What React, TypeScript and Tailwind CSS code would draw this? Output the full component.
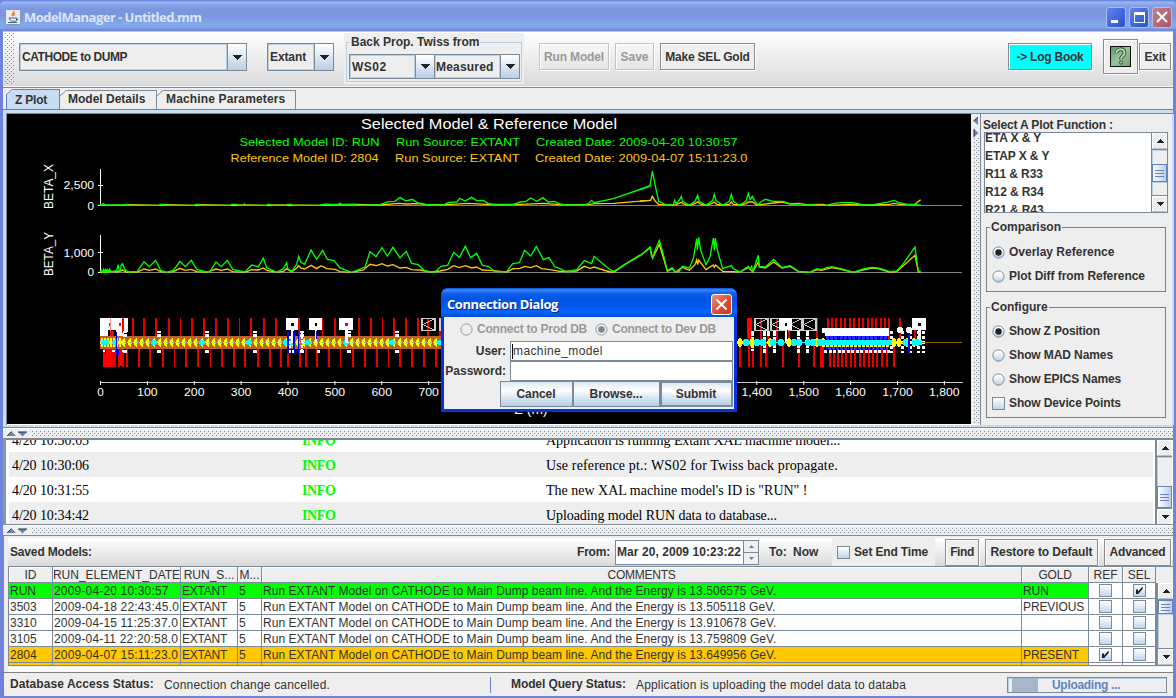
import type { ReactNode } from 'react';

/* ---------- shared Metal widgets ---------- */

const BOLD = 'font-bold text-[12px] leading-[14px] whitespace-nowrap text-[#333]';

function Label({ children, className = '' }: { children: ReactNode; className?: string }) {
  return <span className={`font-bold text-[12px] leading-[14px] whitespace-nowrap ${className}`}>{children}</span>;
}

function Combo({ text, className, tracking }: { text: string; className: string; tracking: string }) {
  return (
    <div className={`flex shrink-0 border border-[#7a8a99] ${className}`}>
      <div className="flex min-w-0 flex-1 items-center border border-[#b8cfe5] bg-[#eee] pl-px">
        <Label className={tracking}>{text}</Label>
      </div>
      <div className="flex w-[19px] shrink-0 items-center justify-center border-l border-[#7a8a99] bg-gradient-to-b from-white to-[#b8cfe5]">
        <svg width="10" height="5" viewBox="0 0 10 5" shapeRendering="crispEdges">
          <path d="M0 0h10L5 5z" fill="#222" />
        </svg>
      </div>
    </div>
  );
}

function ToolButton({ children, className }: { children: ReactNode; className: string }) {
  return (
    <div className={`flex shrink-0 items-center justify-center border shadow-[1px_1px_0_#fff,inset_1px_1px_0_#fff] ${className}`}>
      {children}
    </div>
  );
}

function Radio({ on = false, disabled = false }: { on?: boolean; disabled?: boolean }) {
  return (
    <svg width="13" height="13" viewBox="0 0 13 13" className="-ml-px shrink-0">
      <defs>
        <linearGradient id="radioFill" x1="0" y1="0" x2="0" y2="1">
          <stop offset="0.2" stopColor="#fff" />
          <stop offset="1" stopColor="#b8cfe5" />
        </linearGradient>
      </defs>
      <circle cx="6.5" cy="6.5" r="5.6" fill={disabled ? '#eee' : 'url(#radioFill)'} stroke={disabled ? '#999' : '#7a8a99'} />
      {on && <circle cx="6.5" cy="6.5" r="3.2" fill={disabled ? '#7a8a99' : '#222'} />}
    </svg>
  );
}

function Check({ on = false }: { on?: boolean }) {
  return (
    <span className="-ml-px flex size-[13px] shrink-0 items-center justify-center border border-[#7a8a99] bg-gradient-to-b from-white to-[#c0d6ec]">
      {on && (
        <svg width="9" height="9" viewBox="0 0 9 9">
          <path d="M1 3.5h2v2L7.6 0.6V3L3.2 8H1z" fill="#222" />
        </svg>
      )}
    </span>
  );
}

function ScrollArrow({ up = false }: { up?: boolean }) {
  return (
    <div className="flex h-4 shrink-0 items-center justify-center border border-white border-b-[#b8c0c8] bg-[#eee]">
      <svg width="8" height="4" viewBox="0 0 8 4" shapeRendering="crispEdges">
        <path d={up ? 'M0 4h8L4 0z' : 'M0 0h8L4 4z'} fill="#222" />
      </svg>
    </div>
  );
}

function ScrollBar({ gapClass, thumbClass, className = 'w-[17px] border-l-2' }: { gapClass: string; thumbClass: string; className?: string }) {
  return (
    <div className={`flex shrink-0 flex-col border-[#7a8a99] bg-[#eee] ${className}`}>
      <ScrollArrow up />
      <div className={`shrink-0 border-t border-[#7a8a99] shadow-[inset_1px_1px_0_#b8cfe5] ${gapClass}`} />
      <div className={`flex shrink-0 flex-col items-center justify-center gap-px border border-[#6382bf] bg-gradient-to-r from-white to-[#b8cfe5] ${thumbClass}`}>
        <i className="mb-px h-px w-[9px] bg-[#6382bf]" />
        <i className="mb-px h-px w-[9px] bg-[#6382bf]" />
        <i className="h-px w-[9px] bg-[#6382bf]" />
      </div>
      <div className="flex-1 border-b border-[#7a8a99] shadow-[inset_1px_1px_0_#b8cfe5]" />
      <ScrollArrow />
    </div>
  );
}

const DOTS =
  'bg-[radial-gradient(circle_at_0.5px_0.5px,#7f8993_0.6px,transparent_0.65px),radial-gradient(circle_at_2.5px_2.5px,#7f8993_0.6px,transparent_0.65px)] bg-[length:4px_4px]';

function HorizontalDivider() {
  return (
    <div className="flex h-[10px] shrink-0 items-center border-t border-white bg-[#eee] pl-[4px]">
      <svg width="21" height="6" viewBox="0 0 21 6" className="mr-1">
        <path d="M0 5L4.5 0.5L9 5z" fill="#6382bf" />
        <path d="M0 5L4.5 0.5" stroke="#333" fill="none" />
        <path d="M11 1h9L15.500 5.500z" fill="#6382bf" />
        <path d="M11 1h9" stroke="#333" fill="none" />
      </svg>
      <div className={`h-[5px] flex-1 ${DOTS}`} />
    </div>
  );
}

/* ---------- title bar and tool bar ---------- */

function TitleBar() {
  return (
    <div className="flex h-[31px] shrink-0 items-center rounded-t-[6px] bg-[linear-gradient(#6886e0_0,#6f8fe6_1px,#9db9f0_2px,#8aa8ea_4px,#7b97e0_9px,#7b97e0_16px,#82a9ea_24px,#7fa4e8_28px,#6f86da_30px)] pt-[3px] pr-1 pl-[5px]">
      <svg width="16" height="16" viewBox="0 0 16 16">
        <rect x="0.500" y="0.500" width="15" height="15" rx="1" fill="#e8eaee" stroke="#8796ad" />
        <path d="M8.500 2c2 1.500-3 3-.8 5M10 4c-1.500 1-1.500 1.500-.8 3" stroke="#ee7a22" fill="none" strokeWidth="1.300" />
        <path d="M4 9h7.500v2.500c0 1-6 1-6 0zM11.500 9.500c2 0 1.500 2-.3 2M3 13.500h9" stroke="#3f628c" fill="none" />
      </svg>
      <span className="ml-[3px] font-['Open_Sans',sans-serif] text-[13px] leading-[18px] font-bold tracking-[-0.53px] whitespace-nowrap text-[#dbe6fa]">
        ModelManager - Untitled.mm
      </span>
      <div className="ml-auto flex gap-[3px]">
        <div className="flex h-[21px] w-[20px] items-end rounded-[3px] border border-[#a9bdf3] bg-gradient-to-br from-[#5b85ee] to-[#2a52cc] pb-[4px] pl-[4px]">
          <i className="h-[3px] w-[7px] bg-white" />
        </div>
        <div className="flex h-[21px] w-[20px] items-center justify-center rounded-[3px] border border-[#a9bdf3] bg-gradient-to-br from-[#5b85ee] to-[#2a52cc]">
          <i className="h-[11px] w-[11px] border border-t-[3px] border-white" />
        </div>
        <div className="flex h-[21px] w-[20px] items-center justify-center rounded-[3px] border border-[#c0b7df] bg-gradient-to-br from-[#c08090] to-[#a55565]">
          <svg width="12" height="12" viewBox="0 0 12 12">
            <path d="M1 1l10 10M11 1L1 11" stroke="#fff" strokeWidth="2" />
          </svg>
        </div>
      </div>
    </div>
  );
}

function ToolBar() {
  return (
    <div className="flex h-[56px] shrink-0 items-start border-y border-[#c8c8c8] border-b-[#f4f4f4] bg-gradient-to-b from-white to-[#dadada] pl-[2px]">
      <div className={`mt-px h-[51px] w-[10px] shrink-0 ${DOTS}`} />
      <Combo text="CATHODE to DUMP" className="mt-[11px] ml-[4px] h-[28px] w-[228px]" tracking="tracking-[-0.45px]" />
      <Combo text="Extant" className="mt-[11px] ml-[20px] h-[28px] w-[67px]" tracking="tracking-[-0.1px]" />
      <div className="ml-[10px] mt-px h-[51px] w-[180px] shrink-0 bg-[#eee] pt-[2px] pl-[2px]">
        <fieldset className="h-[47px] w-[176px] border border-[#b8cfe5]">
          <legend className={`${BOLD} -mt-[8px] ml-[3px] h-[14px] px-px`}>Back Prop. Twiss from</legend>
          <div className="-mt-px flex pl-[2px] pt-[6px]">
            <Combo text="WS02" className="h-[25px] w-[86px]" tracking="tracking-[0.5px]" />
            <Combo text="Measured" className="-ml-px h-[25px] w-[86px]" tracking="tracking-[0.2px] -ml-px" />
          </div>
        </fieldset>
      </div>
      <ToolButton className="mt-[11px] ml-[15px] h-[27px] w-[70px] border-[#c4c4c4]">
        <Label className="tracking-[-0.15px] text-[#999]">Run Model</Label>
      </ToolButton>
      <ToolButton className="mt-[11px] ml-[6px] h-[27px] w-[39px] border-[#c4c4c4]">
        <Label className="text-[#999]">Save</Label>
      </ToolButton>
      <ToolButton className="mt-[11px] ml-[6px] h-[27px] w-[95px] border-[#8c8c8c] bg-[#eee]">
        <Label className="tracking-[-0.2px]">Make SEL Gold</Label>
      </ToolButton>
      <ToolButton className="mt-[11px] ml-auto h-[27px] w-[84px] border-[#8c8c8c] bg-[#00ffff]">
        <Label className="tracking-[-0.24px]">-&gt; Log Book</Label>
      </ToolButton>
      <ToolButton className="mt-[7px] ml-[11px] h-[35px] w-[35px] border-[#8c8c8c] bg-[#eee]">
        <svg width="21" height="21" viewBox="0 0 21 21">
          <defs>
            <linearGradient id="helpFill" x1="0" y1="0" x2="1" y2="1">
              <stop offset="0" stopColor="#5f9367" />
              <stop offset="0.500" stopColor="#98c39a" />
              <stop offset="1" stopColor="#6fa073" />
            </linearGradient>
          </defs>
          <rect x="0.500" y="0.500" width="20" height="20" fill="url(#helpFill)" stroke="#111" />
          <path d="M6.500 7.500c0-5.500 8-5.500 8-.8 0 3.500-3.500 3-3.500 6.500" fill="none" stroke="#2c4f32" strokeWidth="3.800" />
          <path d="M6.500 7.500c0-5.500 8-5.500 8-.8 0 3.500-3.500 3-3.500 6.500" fill="none" stroke="#b4d8b4" strokeWidth="2" />
          <circle cx="11" cy="16.500" r="1.600" fill="#b4d8b4" stroke="#2c4f32" />
        </svg>
      </ToolButton>
      <ToolButton className="mt-[11px] mr-[2px] ml-px h-[27px] w-[32px] border-[#8c8c8c] bg-[#eee]">
        <Label className="tracking-[-0.2px]">Exit</Label>
      </ToolButton>
    </div>
  );
}

function Tab({ text, className, labelClass, active = false }: { text: string; className: string; labelClass: string; active?: boolean }) {
  return (
    <div className={`relative shrink-0 overflow-hidden ${active ? 'h-[20px] bg-[#c8ddf2] pt-px' : 'h-[19px] bg-[#eee]'} ${className}`}>
      <div className={`absolute inset-0 border-t border-r ${active ? 'border-l border-[#6382bf]' : 'border-[#7a8a99]'}`} />
      <svg className="absolute top-0 left-0" width="7" height="6" viewBox="0 0 7 6">
        <path d="M0 0H7L0 6z" fill="#eee" />
        <path d="M0 6L6.500 0" stroke={active ? '#6382bf' : '#7a8a99'} />
      </svg>
      <div className="relative flex h-[19px] items-center">
        <Label className={labelClass}>{text}</Label>
      </div>
    </div>
  );
}

/* ---------- plot ---------- */

const GREEN = '#00ff00';
const GOLD = '#ffc800';

const LEFT = 0;
const MID = 320;
const RIGHT = 640;

const traces: { ox: number; color: string; d: string }[] = [
  { ox: LEFT, color: GOLD, d: '300,280 372,280 376,278 386,278 480,280 498,278 584,280 598,278 694,280 710,279 802,280 812,279 972,280 990,278' },
  { ox: MID, color: GOLD, d: '0,279 110,277 180,279 235,274 260,276 290,275 320,278 380,278 445,274 500,277 600,277 670,274 720,278 810,277 825,275 880,274 990,265' },
  { ox: RIGHT, color: GOLD, d: '0,267 32,265 37,253 46,268 56,277 100,279 108,278 124,271 130,276 148,280 165,275 173,269 180,276 198,280 215,275 223,270 230,277 248,279 268,277 274,270 280,277 300,279 318,275 325,270 338,270 350,279 400,273 428,270 450,276 476,274 500,278 550,277 560,280 640,277 700,279 750,277 762,274 780,277 825,277 836,268 842,263' },
  { ox: LEFT, color: GREEN, d: '300,279 305,279 310,274 315,279 370,279 375,277 384,277 388,280 478,280 480,277 496,277 500,280 584,280 586,277 598,277 600,280 692,280 695,277 710,277 712,280 731,280 733,276 735,280 800,280 802,277 810,277 812,280 860,280 863,277 874,277 877,280 970,280 973,277 990,277' },
  { ox: MID, color: GREEN, d: '0,279 10,277 55,277 60,274 64,277 108,277 112,280 180,278 205,269 225,268 240,256 258,267 277,262 295,273 320,278 370,279 385,271 410,270 420,259 435,267 455,256 470,266 490,265 505,275 530,279 580,278 600,270 618,268 632,258 650,268 669,257 685,270 703,268 720,276 740,279 790,279 805,275 815,265 822,272 880,260 990,222' },
  { ox: RIGHT, color: GREEN, d: '0,233 30,222 37,177 46,222 56,268 80,279 100,278 104,265 108,275 118,265 124,253 128,268 148,280 165,268 173,250 178,268 198,280 218,266 223,247 228,266 248,280 268,268 274,247 280,268 298,280 318,268 325,244 330,263 337,253 345,268 354,279 362,270 376,262 400,268 428,268 460,278 490,280 510,277 530,280 560,280 580,275 600,272 640,272 670,279 700,278 740,271 762,265 775,271 800,277 842,279' },
  { ox: LEFT, color: GOLD, d: '300,481 340,478 350,480 368,474 380,481 412,480 432,471 448,475 467,471 482,479 500,481 520,479 540,469 556,475 574,472 590,479 620,481 648,471 664,475 682,471 698,479 735,481 755,473 775,474 790,468 800,475 830,481 850,478 860,470 875,480 890,468 896,461 902,468 914,471 933,460 950,470 960,463' },
  { ox: MID, color: GOLD, d: '0,462 8,463 20,470 45,472 60,479 95,481 130,474 150,457 170,461 186,455 202,462 219,458 240,468 259,466 275,473 300,474 330,480 360,477 383,472 401,461 418,467 436,461 455,468 470,465 487,474 510,475 560,480 580,470 600,469 614,463 632,467 649,461 665,470 690,473 720,478 770,477 793,463 810,469 822,465 870,480 882,480 915,457 960,429' },
  { ox: RIGHT, color: GOLD, d: '0,432 30,407 38,438 58,397 82,478 97,470 106,481 127,466 148,475 165,458 170,444 173,458 176,444 198,473 220,459 223,466 227,459 248,478 300,480 325,466 338,480 355,450 358,465 376,468 401,450 426,468 451,463 475,479 510,481 530,473 545,475 575,467 600,471 640,481 695,468 715,470 750,481 770,479 825,430 835,480 842,480' },
  { ox: LEFT, color: GREEN, d: '300,480 304,474 308,480 311,472 314,480 317,472 320,480 323,473 326,479 329,471 334,480 350,476 355,458 358,478 362,478 363,460 368,455 374,472 385,480 412,478 432,449 448,464 467,445 482,475 500,481 520,475 540,448 556,464 574,445 590,472 620,480 630,478 648,450 664,464 682,445 698,472 735,480 755,459 775,464 790,438 800,467 830,481 850,470 860,452 863,470 875,478 890,457 896,433 902,450 914,457 933,414 950,442 960,427' },
  { ox: MID, color: GREEN, d: '0,427 8,415 22,442 42,446 60,468 95,481 135,465 150,419 168,434 186,407 202,432 219,406 240,438 259,418 275,454 295,458 315,477 345,481 363,463 383,460 401,421 418,436 436,403 452,437 470,424 487,460 505,463 525,479 560,479 578,455 598,452 614,415 632,432 649,403 670,443 687,437 705,465 720,470 740,480 770,473 793,446 815,455 822,433 835,444 870,473 882,478 915,457 960,431' },
  { ox: RIGHT, color: GREEN, d: '0,431 30,405 34,430 38,438 45,415 58,385 66,412 82,475 97,467 106,480 118,478 127,463 148,468 160,440 170,380 172,415 176,376 182,415 198,458 210,435 220,378 223,415 226,378 232,415 248,470 274,461 280,470 300,480 325,463 330,471 335,463 338,480 355,430 358,463 376,465 401,442 426,467 451,461 475,478 510,481 530,470 545,473 560,467 575,464 600,469 640,481 670,471 695,466 715,468 750,479 770,477 790,455 825,405 835,478 842,478' },
];

const topRed = [132.700, 144, 155.700, 168.700, 180.300, 192, 204, 216, 228, 239.500, 251, 264, 275.700, 299, 322.500, 335, 359, 371, 382.500, 394, 406, 418, 428, 440];
const bottomRed = [104, 106, 108, 110, 113, 115, 119, 123, 126.700, 138.700, 150, 162.700, 174.300, 186, 198, 210.500, 222, 234, 245, 258, 270, 281, 288, 300, 306, 316.700, 328.700, 340.500, 353, 365, 377, 388.500, 400, 412, 424, 436];
const topRedRight = [749, 751, 761, 768, 777, 789, 817, 828, 832, 836, 841, 845, 850, 854, 859, 863, 868, 872, 876, 881, 885, 889, 900, 915];
const bottomRedRight = [740, 749, 753, 761, 766, 783, 799, 814, 821, 823, 830, 834, 838, 842, 846, 851, 855, 860, 864, 869, 873, 877, 882, 887, 894];
const dotColumns = [124.500, 159, 206.500, 254.500, 302, 349, 397];

function Trace({ ox, color, d }: { ox: number; color: string; d: string }) {
  return <polyline points={d} transform={`translate(${ox} 112) scale(0.33333)`} fill="none" stroke={color} strokeWidth="4" />;
}

function Fit({ x, y, w, size, fill = '#fff', children }: { x: number; y: number; w: number; size: number; fill?: string; children: string }) {
  return (
    <text x={x} y={y} fontSize={size} fill={fill} textLength={w} lengthAdjust="spacingAndGlyphs">
      {children}
    </text>
  );
}

function Monitor({ x, w = 13, dot = '#000' }: { x: number; w?: number; dot?: string }) {
  return (
    <g>
      <rect x={x} y={318} width={w} height={12} fill="#fff" />
      <rect x={x + w / 2 - 1} y={323} width={2.500} height={2.500} fill={dot} />
      <rect x={x + w / 2 - 1} y={330} width={2.500} height={13} fill="#fff" />
    </g>
  );
}

function Screen({ x }: { x: number }) {
  return <path d={`M${x} 318.500h13v12h-13zM${x + 13} 318.500l-12 6l12 6`} fill="none" stroke="#ccc" strokeWidth="1.200" />;
}

function DeviceRow() {
  return (
    <g shapeRendering="crispEdges">
      {topRed.map((x) => <rect key={x} x={x - 0.8} y={318} width={1.700} height={20} fill="#e60000" />)}
      {bottomRed.map((x) => <rect key={x} x={x - 0.8} y={346} width={1.700} height={21} fill="#e60000" />)}
      {topRedRight.map((x) => <rect key={x} x={x - 0.8} y={318} width={1.700} height={24} fill="#e60000" />)}
      {bottomRedRight.map((x) => <rect key={x} x={x - 0.8} y={342} width={1.700} height={25} fill="#e60000" />)}
      <rect x={747} y={318} width={5} height={20} fill="#f00" />
      <rect x={103} y={349} width={9} height={18} fill="#f00" />
      <rect x={100} y={318} width={23} height={12} fill="#fff" />
      <rect x={123} y={318} width={5} height={14} fill="#fff" />
      <rect x={100} y={330} width={8} height={8} fill="#fff" />
      <rect x={116} y={330} width={8} height={6} fill="#fff" />
      <rect x={109} y={323} width={2} height={3} fill="#f00" />
      <rect x={119} y={323} width={2} height={3} fill="#f00" />
      <rect x={121.500} y={318} width={2} height={15} fill="#f00" />
      <rect x={110} y={318} width={1} height={17} fill="#f99" />
      <rect x={110} y={331} width={4} height={7} fill="#f00" />
      <rect x={120} y={349} width={2} height={17} fill="#f00" />
      <rect x={100} y={336} width={344} height={13} fill="#bf6030" />
      {Array.from({ length: 54 }, (_, i) => 121 + i * 6).map((x) => (
        <g key={x}>
          <path d={`M${x} 342.500L${x + 4} 337V348z`} fill="#ff0" />
          <path d={`M${x + 2.500} 342.500L${x + 5} 340V345z`} fill="#7fd690" />
        </g>
      ))}
      {Array.from({ length: 7 }, (_, i) => 100 + i * 3).map((x) => (
        <path key={x} d={`M${x} 342.500L${x + 2} 336L${x + 4} 342.500L${x + 2} 349z`} fill="#ff0" />
      ))}
      {[104, 106, 115, 154, 202, 249, 286, 292, 308, 346, 392, 440].map((x) => <circle key={x} cx={x} cy={342.500} r={3} fill="#0ff" />)}
      {dotColumns.map((x) => (
        <g key={x} fill="#fff">
          <rect x={x - 2} y={330.500} width={4} height={2.500} />
          <rect x={x - 2} y={334} width={4} height={2.500} />
          <rect x={x - 2} y={350} width={4} height={2.500} />
        </g>
      ))}
      <path d="M105.500 350v5M116.500 332v23M118.500 350v5" stroke="#00f" />
      <path d="M103 351h2M112 351h3M122 351h4" stroke="#fff" strokeWidth="2" />
      <Monitor x={286} w={12} />
      <Monitor x={309} />
      <Monitor x={339} w={14} dot="#f00" />
      <path d="M288 331v23M294 331v23M298.500 331v23M316.500 331v8" stroke="#00f" strokeWidth="1.800" />
      <path d="M317 349v8" stroke="#909" />
      <path d="M290 336v18M293 350v4M302 331v22M318.500 350v3" stroke="#fff" strokeWidth="2.500" strokeDasharray="3 1.500" />
      <Screen x={422} />
      <Screen x={440} />

      <Screen x={755} />
      <Screen x={771} />
      <Screen x={789} />
      <Screen x={803} />
      <Monitor x={779} w={13} />
      <Monitor x={912} w={14} />
      <path d="M764 331v22M774 331v22M798 331v22M807 331v22M752 331v20M768 331v5" stroke="#fff" strokeWidth="3" strokeDasharray="5 1" />
      <path d="M891 331v22M902 331v22M910 331v22M918 331v22M923 331v22" stroke="#fff" strokeWidth="3" strokeDasharray="3 2" />
      <circle cx={900} cy={330} r={3} fill="#fff" />
      <circle cx={909} cy={330} r={3} fill="#fff" />
      <path d="M825 328h64v8H825zM822 328h4v5h-4z" fill="#fff" />
      <path d="M824 351.500h66" stroke="#fff" strokeWidth="3" strokeDasharray="3 1.500" />
      <path d="M826 337.500h62M826 347.500h62" stroke="#22f" strokeWidth="2.500" strokeDasharray="1 1" />
      <path d="M736 342.500h226" stroke="#8f6b00" />
      <path d="M736 342.500h100" stroke="#0ff" strokeWidth="1" />
      {[740, 752, 770, 789, 817, 823, 894, 899, 907, 914].map((x) => (
        <path key={x} d={`M${x - 3.500} 342.500L${x} 337L${x + 3.500} 342.500L${x} 348z`} fill="#ff0" />
      ))}
      <path d="M822 345.500h68" stroke="#ff0" strokeWidth="3" strokeDasharray="3 1" />
      {[746, 757, 763, 773, 781, 794, 799, 808, 813, 820, 906, 917].map((x) => (
        <circle key={x} cx={x} cy={342.500} r={3.300} fill="#0ff" />
      ))}
      <path d="M822 342.500h70" stroke="#0ff" strokeWidth="5" />
      <path d="M912 342.500h10" stroke="#0ff" strokeWidth="5" />
      <path d="M909 333v21" stroke="#00f" strokeWidth="2.500" />
    </g>
  );
}

const axisLabels = [0, 100, 200, 300, 400, 500, 600, 700, 1400, 1500, 1600, 1700, 1800];

function Plot() {
  return (
    <svg width="964" height="310" viewBox="7 114 964 310" className="shrink-0 bg-black font-['Liberation_Sans',Arial,sans-serif]">
      <Fit x={361} y={129} w={256} size={14}>Selected Model &amp; Reference Model</Fit>
      <Fit x={239.500} y={146} w={140} size={11} fill={GREEN}>Selected Model ID: RUN</Fit>
      <Fit x={396} y={146} w={124} size={11} fill={GREEN}>Run Source: EXTANT</Fit>
      <Fit x={536} y={146} w={201.500} size={11} fill={GREEN}>Created Date: 2009-04-20 10:30:57</Fit>
      <Fit x={230.500} y={162} w={148} size={11} fill={GOLD}>Reference Model ID: 2804</Fit>
      <Fit x={395} y={162} w={124.500} size={11} fill={GOLD}>Run Source: EXTANT</Fit>
      <Fit x={535} y={162} w={212.500} size={11} fill={GOLD}>Created Date: 2009-04-07 15:11:23.0</Fit>
      <g transform="translate(53 209) rotate(-90)"><Fit x={0} y={0} w={45} size={13.500}>BETA_X</Fit></g>
      <g transform="translate(53 276) rotate(-90)"><Fit x={0} y={0} w={44} size={13.500}>BETA_Y</Fit></g>
      <Fit x={63.500} y={189} w={30.500} size={10}>2,500</Fit>
      <Fit x={87.500} y={210} w={6.500} size={10}>0</Fit>
      <Fit x={63.500} y={257} w={30.500} size={10}>1,000</Fit>
      <Fit x={87.500} y={276} w={6.500} size={10}>0</Fit>
      <g shapeRendering="crispEdges">
        <path d="M101 205.500H962M101 272.500H962" stroke="#808080" />
        <path d="M100.500 169v37M98 185.500h5M98 205.500h3M100.500 235v38M98 252.500h5M98 272.500h3" stroke="#fff" />
        <path d="M100 382.500H963" stroke="#ccc" strokeWidth="1.400" />
      </g>
      {traces.map((t, i) => <Trace key={i} {...t} />)}
      {axisLabels.map((t) => {
        const x = 100.5 + t * 0.4688;
        const w = t === 0 ? 6.5 : t < 1000 ? 20.5 : 30.5;
        return (
          <g key={t}>
            <path d={`M${x} 381v4`} stroke="#fff" />
            <Fit x={x - w / 2} y={396} w={w} size={10}>{t.toLocaleString('en-US')}</Fit>
          </g>
        );
      })}
      <Fit x={514.500} y={413.500} w={33} size={14}>Z (m)</Fit>
      <DeviceRow />
    </svg>
  );
}

/* ---------- right-hand options ---------- */

function Option({ children, text, className = '' }: { children: ReactNode; text: string; className?: string }) {
  return (
    <div className="flex h-6 items-center gap-1 pl-[6px]">
      {children}
      <Label className={className}>{text}</Label>
    </div>
  );
}

function Group({ title, className, children }: { title: string; className: string; children: ReactNode }) {
  return (
    <fieldset className={`w-[180px] border border-[#808080] ${className}`}>
      <legend className={`${BOLD} -mt-[7px] ml-[3px] h-[14px] px-px`}>{title}</legend>
      {children}
    </fieldset>
  );
}

function OptionsPanel() {
  const items = ['ETA X & Y', 'ETAP X & Y', 'R11 & R33', 'R12 & R34', 'R21 & R43'];
  return (
    <div className="flex h-[311px] flex-1 flex-col border-l border-[#7a8a99] bg-[#eee] pl-[3px]">
      <Label className="mt-[4px] -ml-px tracking-[-0.16px]">Select A Plot Function :</Label>
      <div className="flex h-[81px] w-[184px] overflow-hidden border border-[#7a8a99] bg-white">
        <div className="-mt-[4px] flex-1">
          {items.map((t) => (
            <div key={t} className="flex h-[18px] items-center">
              <Label className="tracking-[-0.1px]">{t}</Label>
            </div>
          ))}
        </div>
        <ScrollBar gapClass="h-[15px]" thumbClass="h-[18px]" className="w-[16px] border-l" />
      </div>
      <Group title="Comparison" className="mt-[7px] ml-[2px] h-[72px]">
        <div className="pt-[6px]">
          <Option text="Overlay Reference"><Radio on /></Option>
          <Option text="Plot Diff from Reference" className="tracking-[-0.06px]"><Radio /></Option>
        </div>
      </Group>
      <Group title="Configure" className="mt-[8px] ml-[2px] h-[118px]">
        <div className="pt-[5px]">
          <Option text="Show Z Position" className="tracking-[-0.16px]"><Radio on /></Option>
          <Option text="Show MAD Names" className="tracking-[-0.1px]"><Radio /></Option>
          <Option text="Show EPICS Names" className="tracking-[-0.12px]"><Radio /></Option>
          <Option text="Show Device Points" className="tracking-[-0.12px]"><Check /></Option>
        </div>
      </Group>
    </div>
  );
}

function PlotPanel() {
  return (
    <div className="flex h-[319px] shrink-0 flex-col border-y border-[#6382bf] border-b-[#7a8a99] bg-[#c8ddf2] px-[3px] pt-[3px]">
      <div className="flex h-[312px] w-[1168px] border-t border-l border-[#7a8a99] bg-white">
        <Plot />
        <div className="flex h-[310px] w-[9px] shrink-0 flex-col items-center bg-[#eee] pt-[2px]">
          <svg width="6" height="22" viewBox="0 0 6 22" className="shrink-0">
            <path d="M5 1v8L0.500 5z" fill="#6382bf" />
            <path d="M5 1L0.500 5" stroke="#333" />
            <path d="M1 13v8L5.500 17z" fill="#6382bf" />
            <path d="M1 13v8" stroke="#333" />
          </svg>
          <div className={`ml-[2px] w-[5px] flex-1 ${DOTS}`} />
        </div>
        <OptionsPanel />
        <div className="w-[2px] shrink-0 bg-[#c8ddf2]" />
      </div>
    </div>
  );
}

/* ---------- connection dialog ---------- */

function DialogButton({ text, className }: { text: string; className: string }) {
  return (
    <div className={`flex h-[26px] items-center justify-center border border-[#7a8a99] bg-[linear-gradient(#dde8f3,#fff_35%,#dfe9f3_60%,#b8cfe5)] ${className}`}>
      <Label className="-ml-px tracking-[-0.06px]">{text}</Label>
    </div>
  );
}

function ConnectionDialog() {
  return (
    <div className="absolute top-[288px] left-[441px] flex h-[124px] w-[296px] flex-col rounded-t-[7px] bg-[#0831d9] px-[3px] pb-[3px]">
      <div className="-mx-[3px] flex h-[29px] shrink-0 items-center rounded-t-[7px] bg-[linear-gradient(#0a4fe0_0,#3c8bf8_2px,#1263ee_5px,#0054e3_10px,#0058ee_18px,#0466fb_24px,#0650d8_28px)] pt-[3px] pr-[5px] pl-[6px]">
        <span className="font-['Open_Sans',sans-serif] text-[13px] leading-[18px] font-bold tracking-[-0.42px] whitespace-nowrap text-white [text-shadow:1px_1px_0_#0a2a80]">
          Connection Dialog
        </span>
        <div className="ml-auto flex size-[21px] items-center justify-center rounded-[3px] border border-white bg-gradient-to-br from-[#f09070] via-[#e05030] to-[#c83a18]">
          <svg width="13" height="13" viewBox="0 0 13 13">
            <path d="M1.500 1.500l10 10M11.500 1.500l-10 10" stroke="#fff" strokeWidth="2" />
          </svg>
        </div>
      </div>
      <div className="flex flex-1 flex-col bg-[#eee]">
        <div className="flex h-[24px] shrink-0 items-center pl-[17px]">
          <Radio disabled />
          <Label className="ml-[4px] w-[119px] tracking-[-0.22px] text-[#999]">Connect to Prod DB</Label>
          <Radio on disabled />
          <Label className="ml-[4px] tracking-[-0.28px] text-[#999]">Connect to Dev DB</Label>
        </div>
        <div className="flex h-[20px] shrink-0 items-center justify-end pr-px">
          <Label className="mr-[4px] tracking-[-0.1px]">User:</Label>
          <div className="flex h-[20px] w-[223px] items-center border border-[#7a8a99] bg-white pl-px">
            <i className="h-[15px] w-px bg-black" />
            <span className="text-[12px] leading-[14px] tracking-[0.4px]">machine_model</span>
          </div>
        </div>
        <div className="flex h-[20px] shrink-0 items-center justify-end pr-px">
          <Label className="mr-[4px]">Password:</Label>
          <div className="h-[20px] w-[223px] border border-[#7a8a99] bg-white" />
        </div>
        <div className="flex shrink-0 justify-end pr-px">
          <DialogButton text="Cancel" className="w-[73px]" />
          <DialogButton text="Browse..." className="w-[87px]" />
          <DialogButton text="Submit" className="w-[73px] border-2" />
        </div>
      </div>
    </div>
  );
}

/* ---------- log, saved models, status ---------- */

const log = [
  { time: '4/20 10:30:05', text: 'Application is running Extant XAL machine model...', track: 'tracking-[-0.07px]' },
  { time: '4/20 10:30:06', text: 'Use reference pt.: WS02 for Twiss back propagate.', track: 'tracking-[0.14px]' },
  { time: '4/20 10:31:55', text: 'The new XAL machine model\'s ID is "RUN" !', track: '' },
  { time: '4/20 10:34:42', text: 'Uploading model RUN data to database...', track: 'tracking-[-0.08px]' },
];

function LogPanel() {
  return (
    <div className="flex h-[87px] shrink-0 overflow-hidden border-t-2 border-b border-l-[3px] border-[#7a8a99] border-l-[#8a97a5] bg-white pr-px">
      <div className="-mt-[13px] flex-1 pr-[2px] pl-[3px] font-['Liberation_Serif',serif] text-[14px] text-black">
        {log.map((row, i) => (
          <div key={row.time} className={`flex h-[25px] items-center pt-[2px] pl-[3px] leading-[16px] whitespace-nowrap ${i % 2 ? 'bg-[#eee]' : 'bg-white'}`}>
            <span className="w-[290px] tracking-[-0.09px]">{row.time}</span>
            <span className="w-[244px] font-bold tracking-[-0.4px] text-[#00ff00]">INFO</span>
            <span className={row.track}>{row.text}</span>
          </div>
        ))}
      </div>
      <ScrollBar gapClass="h-[30px]" thumbClass="h-[22px]" />
    </div>
  );
}

function FilterBar() {
  return (
    <div className="flex h-[28px] shrink-0 items-center bg-gradient-to-b from-white to-[#dadada] pl-[2px]">
      <Label className="w-[567px] tracking-[-0.16px]">Saved Models:</Label>
      <Label className="w-[38px] tracking-[-0.2px]">From:</Label>
      <div className="flex h-[25px] w-[129px] items-center border border-[#7a8a99] bg-white pl-px">
        <Label className="tracking-[0.06px]">Mar 20, 2009 10:23:22</Label>
      </div>
      <div className="flex h-[25px] w-[15px] flex-col border border-l-0 border-[#7a8a99] bg-[#eee]">
        {['M0 3h5L2.500 0z', 'M0 0h5L2.500 3z'].map((d, i) => (
          <div key={d} className={`flex flex-1 items-center justify-center ${i === 0 ? 'border-b border-[#7a8a99]' : ''}`}>
            <svg width="5" height="3" viewBox="0 0 5 3"><path d={d} fill="#6b7a8a" /></svg>
          </div>
        ))}
      </div>
      <Label className="ml-[10px] w-[24px]">To:</Label>
      <Label className="w-[39px]">Now</Label>
      <div className="flex h-full w-[103px] items-center gap-[4px] bg-[#eee] pl-[6px]">
        <Check />
        <Label className="tracking-[-0.15px]">Set End Time</Label>
      </div>
      <ToolButton className="ml-[10px] h-[27px] w-[34px] border-[#8c8c8c] bg-[#eee]"><Label className="tracking-[-0.4px]">Find</Label></ToolButton>
      <ToolButton className="ml-[6px] h-[27px] w-[113px] border-[#8c8c8c] bg-[#eee]"><Label className="tracking-[-0.08px]">Restore to Default</Label></ToolButton>
      <ToolButton className="ml-[6px] h-[27px] w-[67px] border-[#8c8c8c] bg-[#eee]"><Label className="tracking-[-0.17px]">Advanced</Label></ToolButton>
    </div>
  );
}

const models = [
  { id: 'RUN', date: '2009-04-20 10:30:57', energy: '13.506575', gold: 'RUN', bg: 'bg-[#00ff00]', ref: false, sel: true },
  { id: '3503', date: '2009-04-18 22:43:45.0', energy: '13.505118', gold: 'PREVIOUS', bg: 'bg-white', ref: false, sel: false },
  { id: '3310', date: '2009-04-15 11:25:37.0', energy: '13.910678', gold: '', bg: 'bg-white', ref: false, sel: false },
  { id: '3105', date: '2009-04-11 22:20:58.0', energy: '13.759809', gold: '', bg: 'bg-white', ref: false, sel: false },
  { id: '2804', date: '2009-04-07 15:11:23.0', energy: '13.649956', gold: 'PRESENT', bg: 'bg-[#ffc800]', ref: true, sel: false },
];

const COLS = 'grid grid-cols-[44px_128px_57px_24px_760px_67px_34px_33px]';
const HEAD = 'flex items-center justify-center overflow-hidden border-r border-b border-[#7a8a99] pt-px whitespace-nowrap shadow-[inset_1px_1px_0_#fff]';
const CELL = 'flex items-center overflow-hidden border-r border-b border-[#7a8a99] pl-px whitespace-nowrap';

function SavedTable() {
  return (
    <div className="flex h-[100px] shrink-0 border-t border-l border-b border-[#7a8a99] text-[12px] leading-[14px]">
      <div className="w-[1148px] overflow-hidden">
        <div className={`${COLS} h-[16px] bg-[#eee]`}>
          <div className={HEAD}>ID</div>
          <div className={HEAD}>RUN_ELEMENT_DATE</div>
          <div className={HEAD}>RUN_S...</div>
          <div className={HEAD}>M...</div>
          <div className={`${HEAD} tracking-[-0.25px]`}>COMMENTS</div>
          <div className={`${HEAD} tracking-[-0.2px]`}>GOLD</div>
          <div className={HEAD}>REF</div>
          <div className={HEAD}>SEL</div>
        </div>
        {models.map((m) => (
          <div key={m.id} className={`${COLS} h-[16px]`}>
            <div className={`${CELL} ${m.bg}`}>{m.id}</div>
            <div className={`${CELL} ${m.bg} tracking-[0.17px]`}>{m.date}</div>
            <div className={`${CELL} ${m.bg} tracking-[-0.24px]`}>EXTANT</div>
            <div className={`${CELL} ${m.bg}`}>5</div>
            <div className={`${CELL} ${m.bg} tracking-[0.05px]`}>
              Run EXTANT Model on CATHODE to Main Dump beam line. And the Energy is {m.energy} GeV.
            </div>
            <div className={`${CELL} ${m.bg} tracking-[-0.1px]`}>{m.gold}</div>
            <div className={`${CELL} justify-center bg-white`}><Check on={m.ref} /></div>
            <div className={`${CELL} justify-center bg-white`}><Check on={m.sel} /></div>
          </div>
        ))}
        <div className={`${COLS} h-[2px]`}>
          {[0, 1, 2, 3, 4, 5].map((i) => <div key={i} className="border-r border-[#7a8a99] bg-[#ffc800]" />)}
          <div className="border-r border-[#7a8a99] bg-white" />
          <div className="border-r border-[#7a8a99] bg-white" />
        </div>
      </div>
      <div className="flex w-[17px] flex-col">
        <div className="h-[16px] bg-[#eee]" />
        <ScrollBar gapClass="h-0" thumbClass="h-[14px]" className="flex-1 border-l-2" />
      </div>
    </div>
  );
}

function StatusBar() {
  return (
    <div className="flex h-[24px] shrink-0 items-center border-t border-l border-[#808080] bg-[#eee] pl-[6px] text-[12px] leading-[14px] whitespace-nowrap">
      <Label className="w-[154px] -mt-px tracking-[0.07px]">Database Access Status:</Label>
      <span className="w-[326px] tracking-[0.19px]">Connection change cancelled.</span>
      <i className="mr-[20px] h-[16px] w-px bg-[#6382bf]" />
      <Label className="w-[125px] -mt-px tracking-[-0.1px]">Model Query Status:</Label>
      <span className="w-[371px] tracking-[0.16px]">Application is uploading the model data to databa</span>
      <div className="flex h-[16px] w-[160px] items-center border border-[#7a8a99] bg-[#eee] pl-[4px] shadow-[inset_1px_1px_0_#b8cfe5]">
        <i className="h-[14px] w-[26px] bg-[#a3b8cc]" />
        <Label className="ml-[14px] tracking-[-0.3px] text-[#6382bf]">Uploading ...</Label>
      </div>
    </div>
  );
}

export default function App() {
  return (
    <div className="relative flex h-[698px] w-[1176px] flex-col overflow-hidden bg-[#6f83db] font-['Liberation_Sans',Arial,sans-serif] text-[#333]">
      <TitleBar />
      <div className="mx-[3px] flex h-[664px] flex-col bg-[#eee]">
        <ToolBar />
        <div className="flex h-[22px] shrink-0 items-end border-t border-[#7a8a99] pl-[3px]">
          <Tab text="Z Plot" className="w-[54px]" labelClass="ml-[9px] tracking-[-0.2px]" active />
          <Tab text="Model Details" className="w-[97px]" labelClass="ml-[8px] -mt-px" />
          <Tab text="Machine Parameters" className="w-[139px]" labelClass="ml-[9px] -mt-px tracking-[0.15px]" />
        </div>
        <PlotPanel />
        <HorizontalDivider />
        <LogPanel />
        <HorizontalDivider />
        <div className="flex h-[137px] shrink-0 flex-col border-t border-l border-[#7a8a99] pt-[2px] pl-[4px]">
          <FilterBar />
          <SavedTable />
          <div className="mt-px h-[5px] bg-white/70" />
        </div>
        <StatusBar />
      </div>
      <ConnectionDialog />
    </div>
  );
}
